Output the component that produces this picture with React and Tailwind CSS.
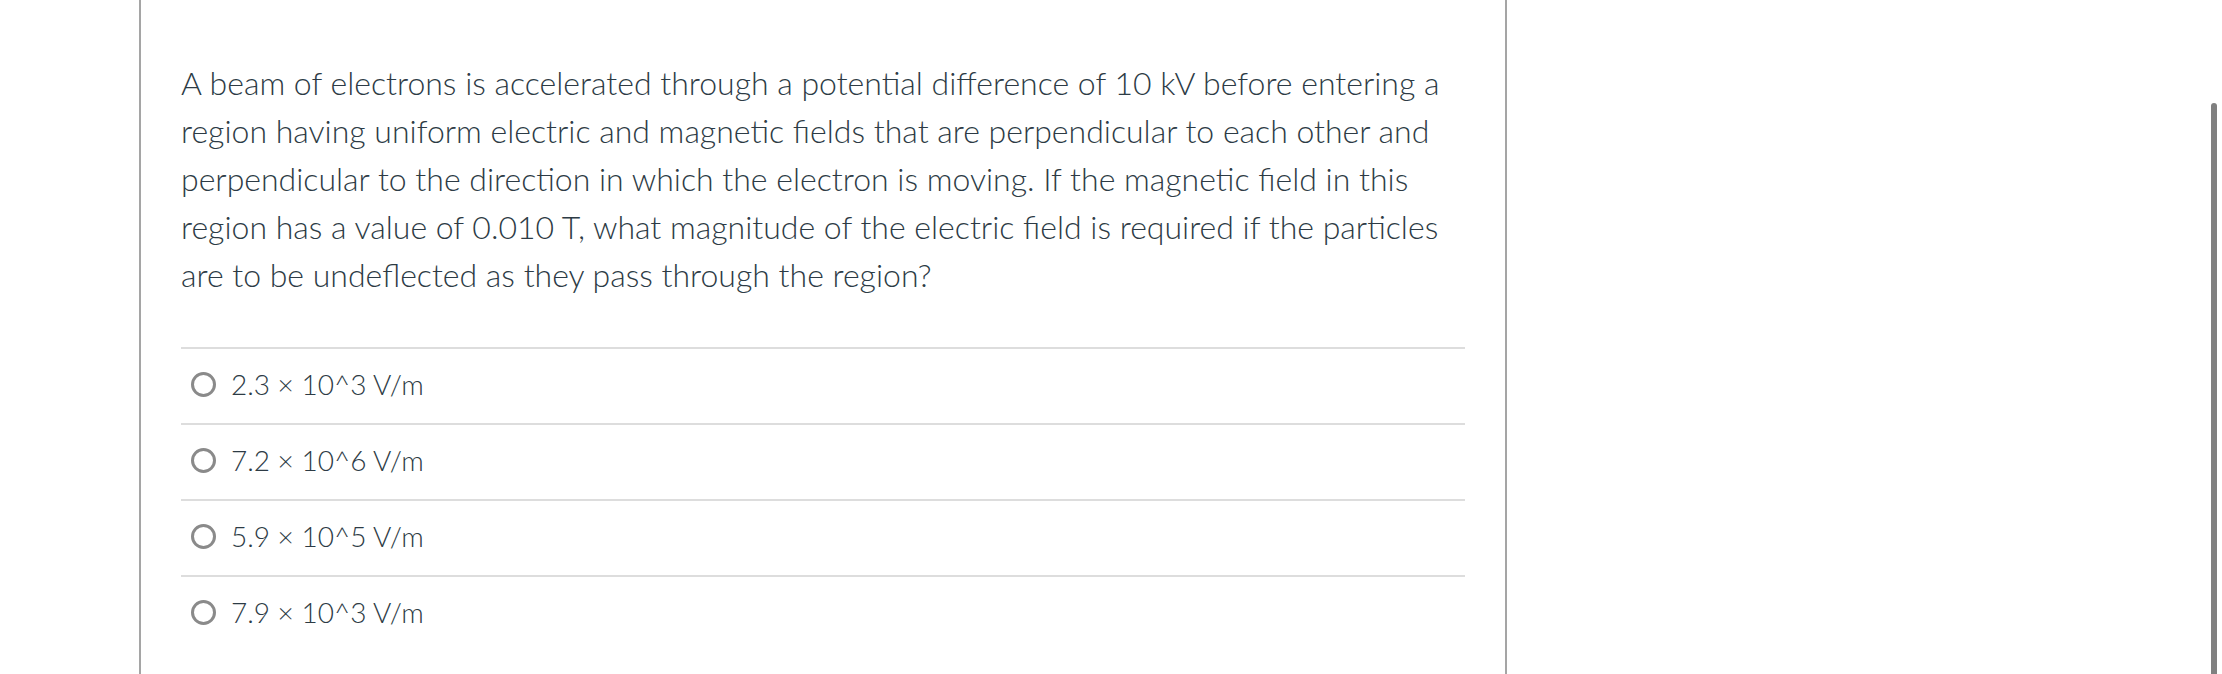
import React from "react";

const lines = [
  "A beam of electrons is accelerated through a potential difference of 10 kV before entering a",
  "region having uniform electric and magnetic fields that are perpendicular to each other and",
  "perpendicular to the direction in which the electron is moving. If the magnetic field in this",
  "region has a value of 0.010 T, what magnitude of the electric field is required if the particles",
  "are to be undeflected as they pass through the region?",
];

const options = [
  "2.3 × 10^3 V/m",
  "7.2 × 10^6 V/m",
  "5.9 × 10^5 V/m",
  "7.9 × 10^3 V/m",
];

const App = () => {
  return (
    <div className="relative h-[674px] w-full overflow-hidden bg-white font-['Lato',sans-serif] font-light text-[#2d3b45]">
      <div className="ml-[139px] h-full w-[1368px] border-x-2 border-[#a5a5a5] px-[40px] pt-[59px]">
        <p className="text-[32px] leading-[48px]">
          {lines.map((l, i) => (
            <span key={i} className="block whitespace-nowrap">{l}</span>
          ))}
        </p>

        <div className="mt-[48px]">
          {options.map((opt, i) => (
            <label key={i} className="flex h-[76px] items-center border-t-2 border-[#dddddd] pb-[4px] pl-[10px]">
              <span className="h-[25px] w-[25px] shrink-0 rounded-full border-[3px] border-[#8a8a8a]" />
              <span className="ml-[15px] text-[28px]">{opt}</span>
            </label>
          ))}
        </div>
      </div>

      {/* overlay scrollbar */}
      <div className="absolute right-[5px] top-[103px] h-[600px] w-[6px] rounded-t-full bg-[#808080]" />
    </div>
  );
};

export default App;
